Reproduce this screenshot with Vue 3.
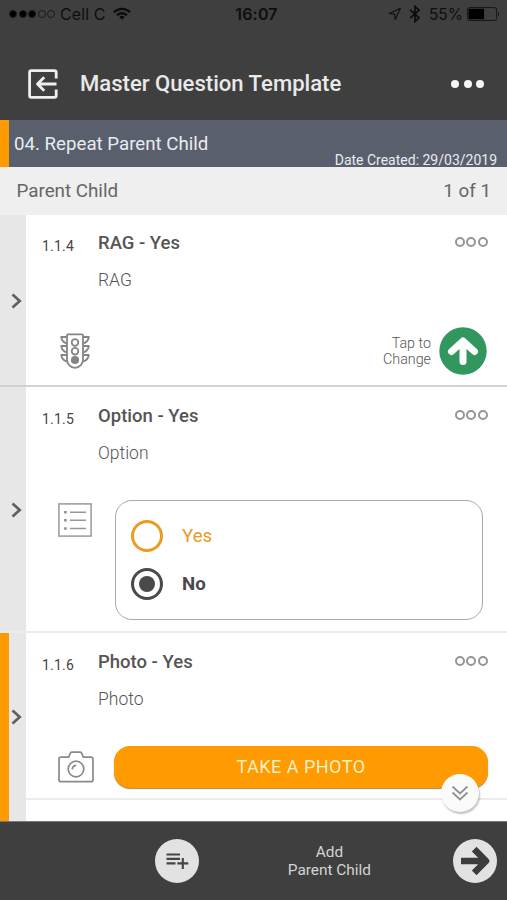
<script setup>
const signal = [true, true, true, false, false]
</script>

<template>
  <div class="screen">
    <header class="top">
      <div class="status">
        <div class="carrier">
          <span class="signal"><i v-for="(on, i) in signal" :key="i" :class="{ on }"></i></span>
          <span class="cell">Cell C</span>
          <svg class="wifi" width="18" height="14" viewBox="0 0 18 14" fill="none" stroke="#0c0c0c" stroke-width="2.3">
            <path d="M1 5.2a11.4 11.4 0 0 1 16 0M4 8.3a7.1 7.1 0 0 1 10 0" />
            <path d="M9 12.8 6.3 10.1a3.9 3.9 0 0 1 5.4 0z" fill="#0c0c0c" stroke="none" />
          </svg>
        </div>
        <span class="time">16:07</span>
        <div class="power">
          <svg width="14" height="14" viewBox="0 0 14 14" fill="none" stroke="#111" stroke-width="1.2" stroke-linejoin="round">
            <path d="M12.4 1.2 1.3 6.5l5.3.6.6 5.4z" />
          </svg>
          <svg class="bt" width="12" height="18" viewBox="0 0 12 18" fill="none" stroke="#0c0c0c" stroke-width="1.7">
            <path d="M1.2 4.8 10 12.8 6 16.5v-15l4 3.7-8.800 8" />
          </svg>
          <span class="percent">55%</span>
          <svg class="battery" width="33" height="14" viewBox="0 0 33 14">
            <rect x=".6" y=".6" width="29" height="12.800" rx="2" fill="none" stroke="#151515" stroke-width="1" />
            <rect x="1.600" y="1.800" width="15.500" height="10.400" fill="#000" />
            <path d="M31 4.500q2 2.500 0 5z" fill="#111" />
          </svg>
        </div>
      </div>
      <div class="titlebar">
        <svg width="30" height="30" viewBox="0 0 30 30" fill="none" stroke="#efefef" stroke-width="2.800" stroke-linejoin="round">
          <path d="M28.200 9.500V3.400q0-1.800-1.800-1.800H3.400q-1.800 0-1.800 1.800v23.200q0 1.800 1.800 1.800h23q1.800 0 1.800-1.800v-6.100" />
          <path d="M28.500 15H10M16.200 8.300 9.500 15l6.700 6.700" />
        </svg>
        <h1>Master Question Template</h1>
        <span class="more"><i></i><i></i><i></i></span>
      </div>
    </header>

    <div class="section">
      <span class="section-name">04. Repeat Parent Child</span>
      <span class="section-date">Date Created: 29/03/2019</span>
    </div>
    <div class="group">
      <span>Parent Child</span>
      <span class="count">1 of 1</span>
    </div>

    <main>
      <section class="row rag">
        <div class="gutter">
          <svg class="chev" width="11" height="16" viewBox="0 0 11 16"><path d="M1.500 1.500 8.700 8l-7.200 6.500" /></svg>
        </div>
        <div class="body">
          <div class="head">
            <span class="num">1.1.4</span>
            <h2>RAG - Yes</h2>
            <span class="opts"><i></i><i></i><i></i></span>
          </div>
          <p>RAG</p>
          <div class="answer">
            <svg class="kind" width="30" height="36" viewBox="0 0 30 36" fill="none" stroke="#858585" stroke-width="1.800" stroke-linejoin="round">
              <path d="M8 1.300h14q1 0 1 1v24.500a8 8 0 0 1-16 0V2.300q0-1 1-1z" />
              <circle cx="15" cy="9.500" r="3.300" />
              <circle cx="15" cy="18.200" r="3.300" />
              <circle cx="15" cy="27" r="3.200" fill="#858585" />
              <path d="M7 4H1.200Q2 9.200 7 10.500M7 13H1.200Q2 18.200 7 19.500M7 22H1.200Q2 27.200 7 28.500" />
              <path d="M23 4h5.800Q28 9.200 23 10.500M23 13h5.800Q28 18.200 23 19.500M23 22h5.800Q28 27.200 23 28.500" />
            </svg>
            <span class="tap">Tap to<br />Change</span>
            <svg width="48" height="48" viewBox="0 0 48 48">
              <circle cx="24" cy="24" r="23.700" fill="#32975f" />
              <path d="M24 34.500V15M12.500 24.500 24 14 35.500 24.500" fill="none" stroke="#fff" stroke-width="7" stroke-linecap="round" stroke-linejoin="round" />
            </svg>
          </div>
        </div>
      </section>

      <section class="row option">
        <div class="gutter">
          <svg class="chev" width="11" height="16" viewBox="0 0 11 16"><path d="M1.500 1.500 8.700 8l-7.200 6.500" /></svg>
        </div>
        <div class="body">
          <div class="head">
            <span class="num">1.1.5</span>
            <h2>Option - Yes</h2>
            <span class="opts"><i></i><i></i><i></i></span>
          </div>
          <p>Option</p>
          <div class="answer">
            <svg class="kind" width="34" height="34" viewBox="0 0 34 34" fill="none" stroke="#999" stroke-width="1.500">
              <rect x=".9" y=".9" width="32.200" height="32.200" />
              <path d="M12 9.200h16M12 17.300h16M12 25.500h16" />
              <path d="M6.200 9.200h2.400M6.200 17.300h2.400M6.200 25.500h2.400" stroke="#888" stroke-width="2.400" />
            </svg>
            <div class="choices">
              <div class="choice yes"><span class="radio"></span><span>Yes</span></div>
              <div class="choice no"><span class="radio"></span><span>No</span></div>
            </div>
          </div>
        </div>
      </section>

      <section class="row photo">
        <div class="gutter flagged">
          <svg class="chev" width="11" height="16" viewBox="0 0 11 16"><path d="M1.500 1.500 8.700 8l-7.200 6.500" /></svg>
        </div>
        <div class="body">
          <div class="head">
            <span class="num">1.1.6</span>
            <h2>Photo - Yes</h2>
            <span class="opts"><i></i><i></i><i></i></span>
          </div>
          <p>Photo</p>
          <div class="answer">
            <svg class="kind" width="36" height="32" viewBox="0 0 36 32" fill="none" stroke="#8a8a8a" stroke-width="1.700" stroke-linejoin="round">
              <path d="M3 6.200h7.800l1.400-3.800q.4-1.200 1.500-1.200h8.600q1.100 0 1.500 1.200l1.400 3.800H33q2 0 2 2v20.500q0 2-2 2H3q-2 0-2-2V8.200q0-2 2-2z" />
              <circle cx="18" cy="18" r="7.800" />
              <path d="M14.200 18.400q.2-3.500 4-4.100" />
            </svg>
            <button>TAKE A PHOTO</button>
          </div>
        </div>
      </section>

      <section class="row next">
        <div class="gutter flagged"></div>
        <div class="body"></div>
      </section>

      <div class="scroll">
        <svg width="18" height="16" viewBox="0 0 18 16" fill="none" stroke="#929292" stroke-width="1.800">
          <path d="m1.500 1.500 7.500 7 7.500-7M1.500 7.500l7.500 7 7.500-7" />
        </svg>
      </div>
    </main>

    <footer>
      <span class="round add">
        <svg width="23" height="16" viewBox="0 0 23 16" fill="none" stroke="#444" stroke-width="2.100">
          <path d="M.5 1.500H14M.5 5.900H14M.5 10.400h9M16.800 5v11M11.300 10.400h11" />
        </svg>
      </span>
      <span class="label">Add<br />Parent Child</span>
      <span class="round go">
        <svg width="32" height="32" viewBox="0 0 32 32" fill="none" stroke="#3c3c3c" stroke-width="6.600" stroke-linejoin="round">
          <path d="M2 16h23M15.200 4.200 27 16 15.200 27.800" />
        </svg>
      </span>
    </footer>
  </div>
</template>

<style>
body {
  margin: 0;
  overflow: hidden;
}
</style>

<style scoped>
* {
  box-sizing: border-box;
}
.screen {
  width: 507px;
  height: 900px;
  display: flex;
  flex-direction: column;
  font-family: Roboto, sans-serif;
  color: #555;
  background: #fff;
  overflow: hidden;
}
svg {
  display: block;
  flex: none;
}
h1, h2, p {
  margin: 0;
}
.top {
  height: 120px;
  flex: none;
  background: #3f3f3f;
}
.status {
  height: 28px;
  display: grid;
  grid-template-columns: 1fr auto 1fr;
  align-items: center;
  padding: 0 7px 0 9px;
  font-family: Inter, sans-serif;
  font-size: 16px;
  color: #0e0e0e;
}
.carrier, .power {
  display: flex;
  align-items: center;
}
.power {
  justify-content: flex-end;
}
.signal {
  display: flex;
  gap: 1.500px;
}
.signal i {
  width: 8px;
  height: 8px;
  border: 1px solid #1b1b1b;
  border-radius: 50%;
}
.signal .on {
  background: #000;
}
.cell {
  margin-left: 5px;
  letter-spacing: 0.100px;
}
.wifi {
  margin-left: 7px;
}
.time {
  padding-left: 4px;
  font-weight: 600;
  letter-spacing: 0.200px;
}
.bt {
  margin-left: 7px;
}
.percent {
  margin-left: 8px;
  font-size: 15.500px;
}
.battery {
  margin-left: 4px;
}
.titlebar {
  height: 92px;
  display: flex;
  align-items: center;
  padding: 20px 23px 0 28px;
}
h1 {
  margin: 0 0 2px 22px;
  font-size: 22.100px;
  font-weight: 500;
  color: #e9e9e9;
  white-space: nowrap;
}
.more {
  display: flex;
  gap: 4.500px;
  margin-left: auto;
}
.more i {
  width: 8px;
  height: 8px;
  border-radius: 50%;
  background: #f5f5f5;
}
.section {
  height: 47px;
  flex: none;
  display: flex;
  justify-content: space-between;
  border-left: 9px solid #ff9a00;
  padding: 0 10px 0 5px;
  background: #5a5f6d;
  color: #e9ebf2;
}
.section-name {
  font-size: 18.700px;
  line-height: 48px;
}
.section-date {
  align-self: flex-end;
  font-size: 14px;
  line-height: 14px;
}
.group {
  height: 48px;
  flex: none;
  display: flex;
  justify-content: space-between;
  padding: 0 16px 0 16.500px;
  background: #efefef;
  color: #666;
  font-size: 18.800px;
  line-height: 48px;
}
main {
  height: 606px;
  flex: none;
  position: relative;
  display: flex;
  flex-direction: column;
}
.row {
  display: flex;
  flex: none;
  border-bottom: 2px solid #ebebeb;
}
.rag {
  height: 172px;
  border-bottom-color: #d2d2d2;
}
.option {
  height: 246px;
}
.photo {
  height: 167px;
}
.next {
  flex: 1;
  border: 0;
}
.gutter {
  width: 26px;
  flex: none;
  display: flex;
  align-items: center;
  padding: 2px 0 0 11px;
  background: #e7e7e7;
}
.flagged {
  margin-bottom: -2px;
  border-left: 9px solid #ff9a00;
  padding: 0 0 0 2px;
}
.next .flagged {
  margin-bottom: 0;
}
.chev path {
  fill: none;
  stroke: #606060;
  stroke-width: 2.700;
}
.body {
  flex: 1;
  padding: 15px 19px 0 16px;
}
.head {
  display: flex;
  align-items: center;
  height: 26px;
}
.num {
  width: 56px;
  padding-top: 5px;
  font-size: 14px;
  letter-spacing: 0.200px;
  color: #444;
}
h2 {
  font-size: 18.500px;
  font-weight: 500;
}
.opts {
  display: flex;
  gap: 1.600px;
  margin: 0 0 2px auto;
}
.opts i {
  width: 10px;
  height: 10px;
  border: 2px solid #959595;
  border-radius: 50%;
}
p {
  margin-left: 56px;
  padding-top: 12px;
  font-size: 17.500px;
  line-height: 24px;
  font-weight: 350;
}
.answer {
  display: flex;
}
.rag .answer {
  align-items: center;
  padding-top: 35px;
  padding-left: 18px;
}
.rag .answer > svg:last-child {
  margin: 0 1.500px 0 7.500px;
}
.tap {
  margin-left: auto;
  text-align: right;
  font-size: 14.300px;
  line-height: 16.500px;
  font-weight: 350;
}
.option .body {
  padding-top: 16px;
}
.option .answer {
  padding: 35px 5px 0 16px;
}
.option .kind {
  margin-top: 3px;
}
.choices {
  flex: 1;
  height: 120px;
  margin-left: 23px;
  padding: 19px 15px;
  border: 1.500px solid #aaa;
  border-radius: 17px;
  display: flex;
  flex-direction: column;
  gap: 16px;
}
.choice {
  display: flex;
  align-items: center;
  gap: 19px;
  font-size: 18.700px;
  line-height: 32px;
}
.radio {
  width: 32px;
  height: 32px;
  border: 3px solid currentColor;
  border-radius: 50%;
  padding: 5px;
}
.yes {
  color: #e99b22;
}
.no {
  color: #4a4a4a;
  font-weight: 700;
}
.no .radio::before {
  content: "";
  display: block;
  width: 16px;
  height: 16px;
  border-radius: 50%;
  background: currentColor;
}
.photo .body {
  padding-top: 16px;
}
.photo .answer {
  padding: 35px 0 0 15.500px;
}
.photo .kind {
  margin-top: 5px;
}
button {
  flex: 1;
  height: 42px;
  margin-left: 20.500px;
  padding: 0;
  border: 0;
  border-radius: 16px;
  background: #ff9a00;
  box-shadow: 0 1px 1px #a98550;
  color: #fff0c8;
  font: 400 18px/40px Roboto, sans-serif;
  letter-spacing: 0.500px;
}
.scroll {
  position: absolute;
  left: 441px;
  top: 559px;
  width: 38px;
  height: 38px;
  border-radius: 50%;
  display: flex;
  align-items: center;
  justify-content: center;
  background: #fafafa;
  box-shadow: 1px 2px 2px rgba(0, 0, 0, 0.250);
}
footer {
  height: 79px;
  flex: none;
  display: flex;
  align-items: center;
  padding: 0 10px 0 155px;
  background: #3f3f3f;
  border-top: 1px solid #777;
}
.round {
  width: 44px;
  height: 44px;
  border-radius: 50%;
  display: flex;
  align-items: center;
  justify-content: center;
  background: #e2e2e2;
}
.label {
  margin-left: auto;
  margin-right: 82px;
  text-align: center;
  font-size: 15.400px;
  line-height: 18px;
  color: #d4d4d4;
}
</style>
